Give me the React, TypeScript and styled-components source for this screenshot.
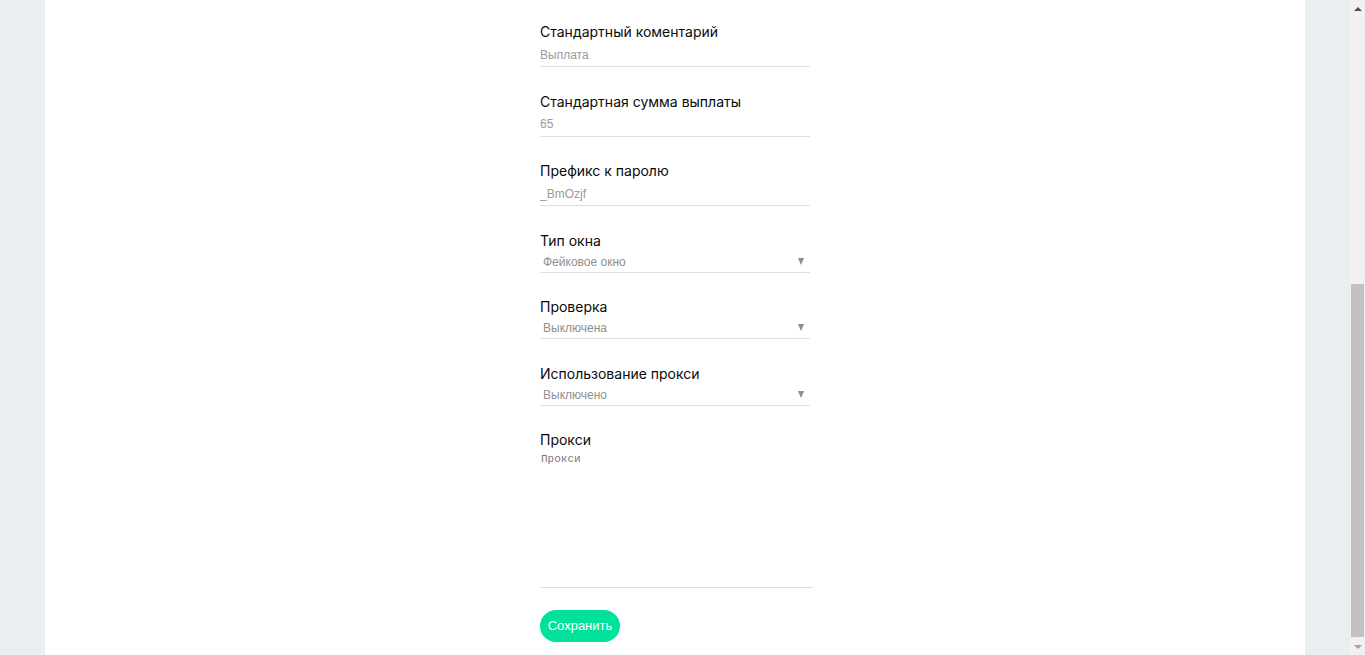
import React from "react";
import styled, { createGlobalStyle } from "styled-components";

const Global = createGlobalStyle`
  html, body { margin: 0; padding: 0; background: #e9eef1; overflow: hidden; }
  body { font-family: "Liberation Sans", Arial, sans-serif; }
  * { box-sizing: border-box; }
`;

const Frame = styled.div`
  display: flex;
  height: 100vh;
`;

const Page = styled.div`
  flex: 1;
  padding: 0 45px;
  background: #e9eef1;
`;

const Panel = styled.main`
  height: 100%;
  background: #ffffff;
  padding-top: 23px;
`;

const Form = styled.form`
  width: 270px;
  margin: 0 auto;
  display: flex;
  flex-direction: column;
`;

const Field = styled.div`
  display: flex;
  flex-direction: column;
  margin-bottom: 25.5px;
`;

const Label = styled.label`
  font-family: Inter, "Noto Sans", sans-serif;
  font-size: 14px;
  line-height: 17px;
  color: #0a0a0a;
  height: 20px;
`;

const TextInput = styled.input`
  width: 270px;
  height: 24px;
  border: none;
  border-bottom: 1px solid #dedede;
  padding: 0;
  font-family: "Liberation Sans", Arial, sans-serif;
  font-size: 12px;
  color: #9a9a9a;
  outline: none;
  background: transparent;
`;

const SelectWrap = styled.div`
  position: relative;
  width: 270px;
  height: 21px;
  border-bottom: 1px solid #dedede;
`;

const Select = styled.select`
  appearance: none;
  width: 100%;
  height: 20px;
  border: none;
  background: transparent;
  padding: 0 0 0 3px;
  font-family: "Liberation Sans", Arial, sans-serif;
  font-size: 12px;
  color: #8f8f8f;
  outline: none;
`;

const Arrow = styled.span`
  position: absolute;
  right: 6px;
  top: 6px;
  width: 0;
  height: 0;
  border-left: 3.5px solid transparent;
  border-right: 3.5px solid transparent;
  border-top: 7px solid #8c8c8c;
  pointer-events: none;
`;

const TextArea = styled.textarea`
  width: 273px;
  height: 137px;
  border: none;
  border-bottom: 1px solid #dedede;
  padding: 2px 1px;
  resize: none;
  font-family: "Liberation Mono", monospace;
  font-size: 11px;
  color: #555;
  outline: none;
  &::placeholder { color: #7c7788; }
`;

const SaveButton = styled.button`
  align-self: flex-start;
  margin-top: -4px;
  width: 80px;
  height: 32px;
  border: none;
  border-radius: 16px;
  background: #00e29c;
  color: #fff;
  font-family: "Liberation Sans", Arial, sans-serif;
  font-size: 13px;
  padding: 0;
  cursor: pointer;
`;

const Scrollbar = styled.div`
  width: 15px;
  flex: none;
  display: flex;
  flex-direction: column;
  background: #f1f1f1;
`;

const ScrollArrow = styled.div<{ $dir: "up" | "down"; $active: boolean }>`
  height: 17px;
  flex: none;
  display: flex;
  align-items: center;
  justify-content: center;
  &::after {
    content: "";
    width: 0;
    height: 0;
    border-left: 4px solid transparent;
    border-right: 4px solid transparent;
    ${(p) =>
      p.$dir === "up"
        ? `border-bottom: 4px solid ${p.$active ? "#505050" : "#a3a3a3"};`
        : `border-top: 4px solid ${p.$active ? "#505050" : "#a3a3a3"};`}
  }
`;

const Track = styled.div`
  flex: 1;
  padding: 267px 1px 1px;
`;

const Thumb = styled.div`
  height: 353px;
  background: #c1c1c1;
`;

type TextFieldProps = { label: string; value: string };
const TextField = ({ label, value }: TextFieldProps) => (
  <Field>
    <Label>{label}</Label>
    <TextInput defaultValue={value} />
  </Field>
);

type SelectFieldProps = { label: string; options: string[] };
const SelectField = ({ label, options }: SelectFieldProps) => (
  <Field>
    <Label>{label}</Label>
    <SelectWrap>
      <Select defaultValue={options[0]}>
        {options.map((o) => (
          <option key={o}>{o}</option>
        ))}
      </Select>
      <Arrow />
    </SelectWrap>
  </Field>
);

export default function App() {
  return (
    <>
      <Global />
      <Frame>
        <Page>
          <Panel>
            <Form onSubmit={(e) => e.preventDefault()}>
              <TextField label="Стандартный коментарий" value="Выплата" />
              <TextField label="Стандартная сумма выплаты" value="65" />
              <TextField label="Префикс к паролю" value="_BmOzjf" />
              <SelectField label="Тип окна" options={["Фейковое окно", "Обычное окно"]} />
              <SelectField label="Проверка" options={["Выключена", "Включена"]} />
              <SelectField label="Использование прокси" options={["Выключено", "Включено"]} />
              <Field>
                <Label>Прокси</Label>
                <TextArea placeholder="Прокси" />
              </Field>
              <SaveButton type="submit">Сохранить</SaveButton>
            </Form>
          </Panel>
        </Page>
        <Scrollbar>
          <ScrollArrow $dir="up" $active />
          <Track>
            <Thumb />
          </Track>
          <ScrollArrow $dir="down" $active={false} />
        </Scrollbar>
      </Frame>
    </>
  );
}
